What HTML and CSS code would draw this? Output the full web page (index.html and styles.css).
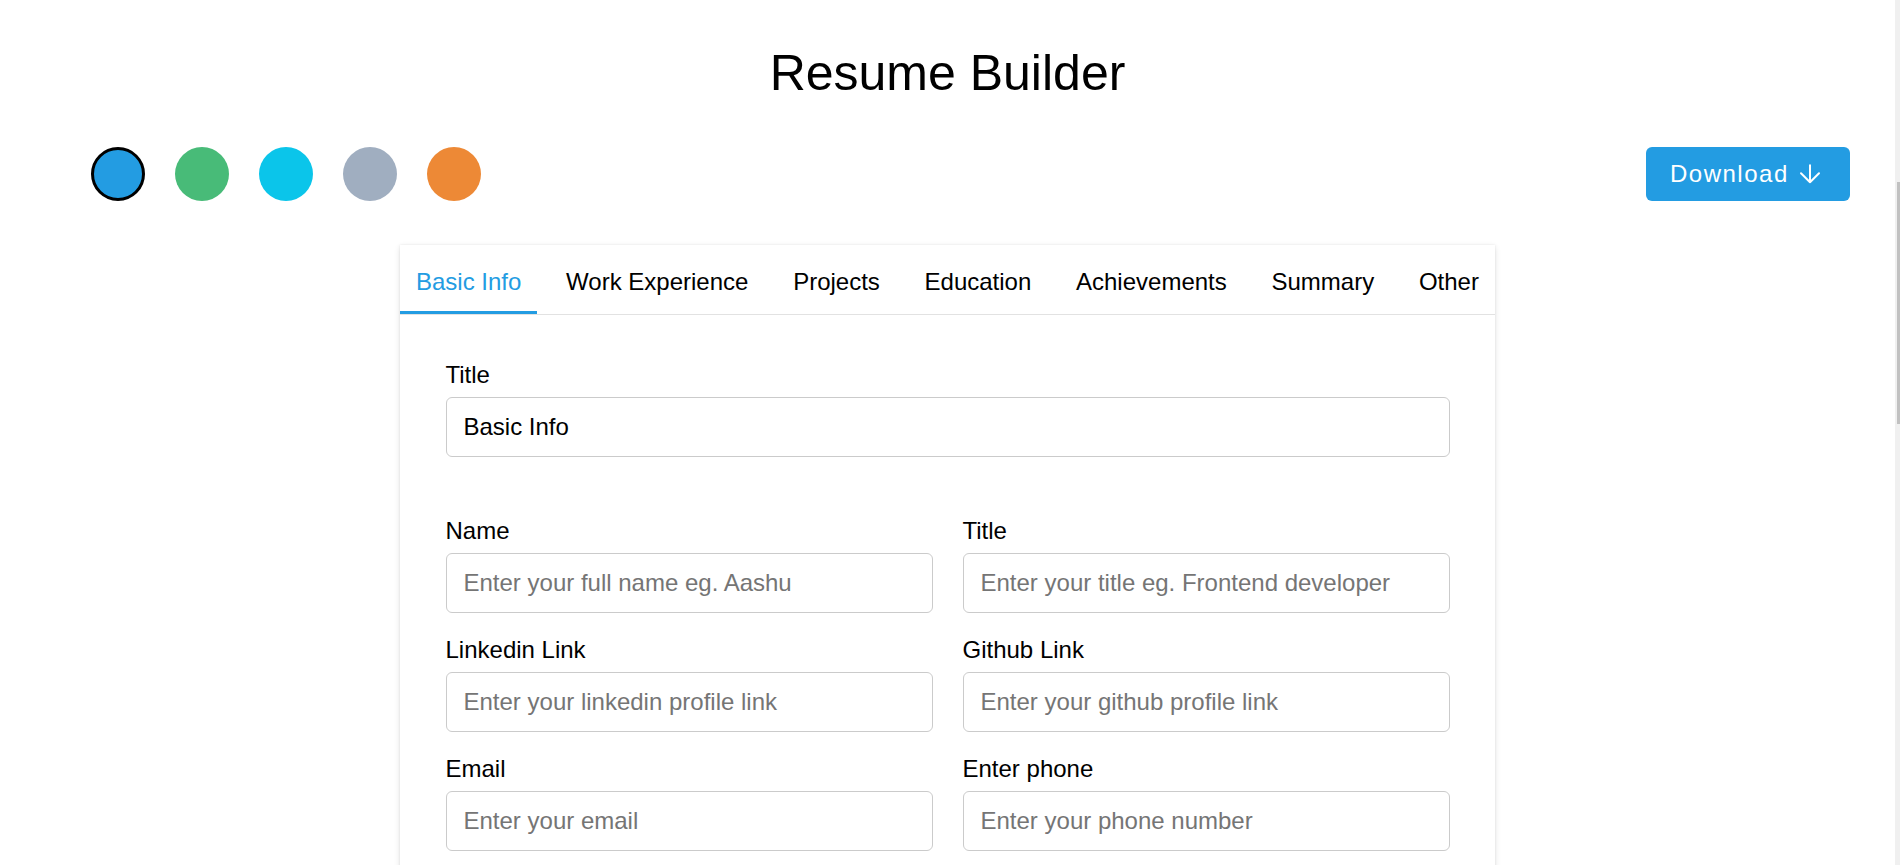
FILE: index.html
```html
<!DOCTYPE html>
<html lang="en">
<head>
<meta charset="utf-8">
<title>Resume Builder</title>
<link rel="stylesheet" href="styles.css">
</head>
<body>
  <div class="page">
    <header class="app-header">
      <h1 class="app-title">Resume Builder</h1>
    </header>

    <div class="toolbar">
      <div class="swatches">
        <span class="swatch swatch-blue active"></span>
        <span class="swatch swatch-green"></span>
        <span class="swatch swatch-cyan"></span>
        <span class="swatch swatch-gray"></span>
        <span class="swatch swatch-orange"></span>
      </div>
      <button class="download-btn" type="button">
        <span>Download</span>
        <svg class="download-icon" width="22" height="20" viewBox="0 0 22 20" aria-hidden="true">
          <path d="M11 1.2V18.2M2 9.2l9 9 9-9" fill="none" stroke="#fff" stroke-width="2" stroke-linecap="round" stroke-linejoin="round"/>
        </svg>
      </button>
    </div>

    <main class="editor">
      <section class="card">
        <nav class="tabs">
          <button class="tab active" type="button">Basic Info</button>
          <button class="tab" type="button">Work Experience</button>
          <button class="tab" type="button">Projects</button>
          <button class="tab" type="button">Education</button>
          <button class="tab" type="button">Achievements</button>
          <button class="tab" type="button">Summary</button>
          <button class="tab" type="button">Other</button>
        </nav>
        <div class="card-body">
          <div class="field">
            <label class="field-label">Title</label>
            <input class="field-input" type="text" value="Basic Info">
          </div>
          <div class="form-grid">
            <div class="field">
              <label class="field-label">Name</label>
              <input class="field-input" type="text" placeholder="Enter your full name eg. Aashu">
            </div>
            <div class="field">
              <label class="field-label">Title</label>
              <input class="field-input" type="text" placeholder="Enter your title eg. Frontend developer">
            </div>
            <div class="field">
              <label class="field-label">Linkedin Link</label>
              <input class="field-input" type="text" placeholder="Enter your linkedin profile link">
            </div>
            <div class="field">
              <label class="field-label">Github Link</label>
              <input class="field-input" type="text" placeholder="Enter your github profile link">
            </div>
            <div class="field">
              <label class="field-label">Email</label>
              <input class="field-input" type="text" placeholder="Enter your email">
            </div>
            <div class="field">
              <label class="field-label">Enter phone</label>
              <input class="field-input" type="text" placeholder="Enter your phone number">
            </div>
          </div>
        </div>
      </section>
    </main>
  </div>

  <div class="scroll-rail" aria-hidden="true">
    <div class="scroll-thumb"></div>
  </div>
</body>
</html>
```

FILE: styles.css
```css
html, body {
  margin: 0;
  padding: 0;
}

body {
  font-family: "Liberation Sans", Arial, sans-serif;
  color: #000;
  background: #fff;
}

.page {
  margin-right: 5px;
}

/* thin page scrollbar overlay at the right edge */
.scroll-rail {
  position: fixed;
  top: 0;
  right: 0;
  bottom: 0;
  width: 5px;
  background: #f0f0f0;
}
.scroll-thumb {
  position: absolute;
  top: 182px;
  right: 0;
  width: 3px;
  height: 242px;
  background: #c1c1c1;
}

.app-title {
  margin: 0;
  padding-top: 44px;
  font-size: 50px;
  line-height: 58px;
  font-weight: 400;
  text-align: center;
}

.toolbar {
  margin-top: 45px;
  height: 54px;
  display: flex;
  align-items: center;
  justify-content: space-between;
  padding: 0 45px 0 91px;
}

.swatches {
  display: flex;
  gap: 30px;
}

.swatch {
  width: 54px;
  height: 54px;
  border-radius: 50%;
  box-sizing: border-box;
  display: block;
}
.swatch.active { border: 3px solid #000; }
.swatch-blue { background: #239ce2; }
.swatch-green { background: #48bb78; }
.swatch-cyan { background: #0bc5ea; }
.swatch-gray { background: #a0aec0; }
.swatch-orange { background: #ed8936; }

.download-btn {
  width: 204px;
  height: 54px;
  box-sizing: border-box;
  display: flex;
  align-items: center;
  gap: 10px;
  padding: 0 0 0 24px;
  border: 0;
  border-radius: 6px;
  background: #239ce2;
  color: #fff;
  font-family: inherit;
  font-size: 24px;
  letter-spacing: 1.5px;
  cursor: pointer;
}
.download-icon { display: block; flex: none; }

.editor {
  margin-top: 44px;
  display: flex;
  justify-content: center;
}

.card {
  width: 1095px;
  background: #fff;
  box-shadow: 0 2px 6px rgba(0, 0, 0, 0.12), 0 0 2px rgba(0, 0, 0, 0.08);
}

.tabs {
  display: flex;
  justify-content: space-between;
  border-bottom: 1px solid #e2e2e2;
}

.tab {
  font-family: inherit;
  font-size: 24px;
  line-height: 28px;
  padding: 23px 16px 15px;
  border: 0;
  border-bottom: 3px solid transparent;
  background: none;
  color: #000;
  cursor: pointer;
}
.tab.active {
  color: #239ce2;
  border-bottom-color: #239ce2;
}

.card-body {
  padding: 46px 45.5px 45px;
}

.field-label {
  display: block;
  font-size: 24px;
  line-height: 28px;
  margin-bottom: 8px;
}

.field-input {
  display: block;
  box-sizing: border-box;
  width: 100%;
  height: 60px;
  padding: 0 17px;
  border: 1px solid #cbcbcb;
  border-radius: 6px;
  font-family: inherit;
  font-size: 24px;
  color: #000;
  background: #fff;
  outline: none;
}
.field-input::placeholder { color: #757575; }

.form-grid {
  margin-top: 60px;
  display: grid;
  grid-template-columns: 1fr 1fr;
  column-gap: 30px;
  row-gap: 23px;
}
```
